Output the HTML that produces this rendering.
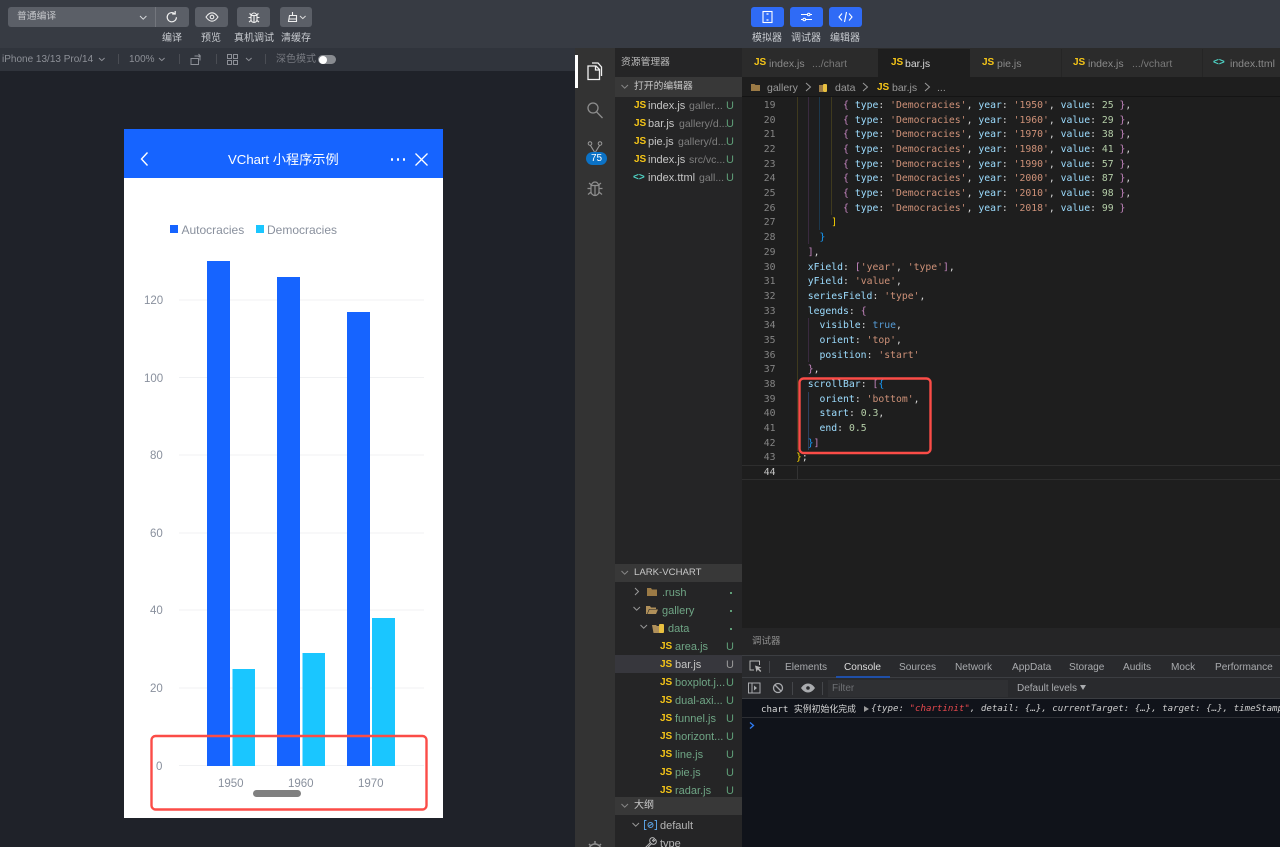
<!DOCTYPE html>
<html><head><meta charset="utf-8">
<style>
html,body{margin:0;padding:0;width:1280px;height:847px;overflow:hidden;background:#1f2229}
body{position:relative;font-family:"Liberation Sans","Noto Sans CJK SC",sans-serif;color:#ccc}
.a,.t,.js,.u{position:absolute}
.t,.js,.u{margin-top:1px}
.t{white-space:nowrap;line-height:16px}
.js{font-weight:bold;color:#f5c518;font-size:10px;line-height:16px;font-family:"Liberation Sans",sans-serif}
.u{font-size:11px;line-height:16px;color:#5f9e78}
svg{position:absolute;overflow:visible}
.lb{font-size:10px;color:#c9ccd1;transform:translateX(-50%)}
.btn{position:absolute;top:7px;height:20px;background:#5b5f67;border-radius:3px}
.bb{position:absolute;top:7px;width:33px;height:20px;background:#2f6bf6;border-radius:3px}
.s{font-size:11px;color:#c5c5c5}
.g{color:#6fa585}
.dim{color:#7f7f7f;font-size:10.5px}
.tab{font-size:10.5px;color:#8a8a8a}
#code{position:absolute;left:796px;top:98.96px;font:9.78px/14.68px "DejaVu Sans Mono","Liberation Mono",monospace;color:#d4d4d4;white-space:pre}
#nums{position:absolute;left:742px;width:33.5px;top:98.96px;font:9.78px/14.68px "DejaVu Sans Mono","Liberation Mono",monospace;color:#858585;text-align:right}
.k{color:#9cdcfe}.r{color:#ce9178}.n{color:#b5cea8}.b{color:#569cd6}.m{color:#c586c0}.c{color:#179fff}.y{color:#ffd700}
.ax{font-size:11.5px;color:#89909d;line-height:14px}
.dt{font-size:10.1px;color:#a9abae}
</style></head><body>

<!-- top toolbar -->
<div class="a" style="left:0;top:0;width:1280px;height:48px;background:#373b43"></div>
<div class="a" style="left:8px;top:7px;width:147px;height:20px;background:#5b5f67;border-radius:3px 0 0 3px"></div>
<div class="a" style="left:155px;top:7px;width:34px;height:20px;background:#5b5f67;border-radius:0 3px 3px 0;border-left:1px solid #73767d;box-sizing:border-box"></div>
<div class="t" style="left:17px;top:8px;font-size:9.8px;color:#c4c6ca">普通编译</div>
<svg style="left:139px;top:15px" width="9" height="6"><path d="M1 1l3.200 3.200L7.400 1" fill="none" stroke="#d6d8db" stroke-width="1"/></svg>
<svg style="left:165px;top:10px" width="14" height="14" viewBox="0 0 14 14"><path d="M11.400 7.200a4.600 4.600 0 1 1-1.500-3.400M10.200 1v3h-3" fill="none" stroke="#f0f0f0" stroke-width="1.200"/></svg>
<div class="t lb" style="left:172px;top:30px">编译</div>

<div class="btn" style="left:195px;width:33px"></div>
<svg style="left:205px;top:11px" width="14" height="12" viewBox="0 0 14 12"><path d="M1 6c2-3 4-4.200 6-4.200S11 3 13 6c-2 3-4 4.200-6 4.200S3 9 1 6z" fill="none" stroke="#eee" stroke-width="1.100"/><circle cx="7" cy="6" r="1.800" fill="none" stroke="#eee" stroke-width="1.100"/></svg>
<div class="t lb" style="left:211px;top:30px">预览</div>

<div class="btn" style="left:237px;width:33px"></div>
<svg style="left:247px;top:10px" width="14" height="14" viewBox="0 0 14 14"><path d="M4.500 5.500a2.500 2.500 0 0 1 5 0M4 5.500h6v4a3 3 0 0 1-6 0zM7 5.500v7M4 7.500H1.500M10 7.500h2.500M4 10.500l-2 1.500M10 10.500l2 1.500M4.500 5L2.500 3.500M9.500 5l2-1.500" fill="none" stroke="#eee" stroke-width="1.100"/></svg>
<div class="t lb" style="left:254px;top:30px">真机调试</div>

<div class="btn" style="left:280px;width:32px"></div>
<svg style="left:288px;top:11px" width="12" height="12" viewBox="0 0 12 12"><path d="M4.500 1v3.500M1.500 4.500h7v6h-8zM1 8h7" fill="none" stroke="#eee" stroke-width="1.100"/></svg>
<svg style="left:299px;top:15px" width="8" height="5"><path d="M1 1l2.800 2.600L6.600 1" fill="none" stroke="#ddd" stroke-width="1"/></svg>
<div class="t lb" style="left:296px;top:30px">清缓存</div>

<div class="bb" style="left:751px"></div>
<svg style="left:761px;top:10px" width="13" height="14" viewBox="0 0 13 14"><rect x="2" y="1.500" width="9" height="11" fill="none" stroke="#fff" stroke-width="1.100"/><path d="M5.500 4h2M5.500 10h2" stroke="#fff" stroke-width="1.200"/></svg>
<div class="t lb" style="left:767px;top:30px">模拟器</div>
<div class="bb" style="left:790px"></div>
<svg style="left:800px;top:11px" width="13" height="12" viewBox="0 0 13 12"><path d="M1 3.500h6.500M10 3.500h2M1 8.500h2M5.500 8.500H12" stroke="#fff" stroke-width="1.100"/><circle cx="8.700" cy="3.500" r="1.300" fill="none" stroke="#fff"/><circle cx="4.300" cy="8.500" r="1.300" fill="none" stroke="#fff"/></svg>
<div class="t lb" style="left:806px;top:30px">调试器</div>
<div class="bb" style="left:829px"></div>
<svg style="left:838px;top:11px" width="15" height="12" viewBox="0 0 15 12"><path d="M4 2.500L1 6l3 3.500M11 2.500L14 6l-3 3.500M8.500 1L6.500 11" fill="none" stroke="#fff" stroke-width="1.100"/></svg>
<div class="t lb" style="left:845px;top:30px">编辑器</div>

<!-- second toolbar -->
<div class="a" style="left:0;top:48px;width:575px;height:23px;background:#30343c"></div>
<div class="t" style="left:2px;top:50.500px;font-size:10px;color:#8d9097">iPhone 13/13 Pro/14</div>
<svg style="left:98px;top:57px" width="8" height="5"><path d="M1 1l2.800 2.600L6.600 1" fill="none" stroke="#8d9097"/></svg>
<div class="a" style="left:118px;top:54px;width:1px;height:10px;background:#4a4d54"></div>
<div class="t" style="left:129px;top:50.500px;font-size:10px;color:#8d9097">100%</div>
<svg style="left:158px;top:57px" width="8" height="5"><path d="M1 1l2.800 2.600L6.600 1" fill="none" stroke="#8d9097"/></svg>
<div class="a" style="left:179px;top:54px;width:1px;height:10px;background:#4a4d54"></div>
<svg style="left:190px;top:53px" width="13" height="13" viewBox="0 0 13 13"><path d="M1 5.500h7.500v6H1zM4.500 3h5.500v4.500M8.500 1l1.800 2-1.800 1" fill="none" stroke="#8d9097"/></svg>
<div class="a" style="left:216px;top:54px;width:1px;height:10px;background:#4a4d54"></div>
<svg style="left:227px;top:54px" width="11" height="11" viewBox="0 0 11 11"><path d="M.5.500h4v4h-4zM6.500.500h4v4h-4zM.5 6.500h4v4h-4zM6.500 6.500h4v4h-4z" fill="none" stroke="#8d9097"/></svg>
<svg style="left:245px;top:57px" width="8" height="5"><path d="M1 1l2.800 2.600L6.600 1" fill="none" stroke="#8d9097"/></svg>
<div class="a" style="left:265px;top:54px;width:1px;height:10px;background:#4a4d54"></div>
<div class="t" style="left:276px;top:51px;font-size:10px;color:#777a81">深色模式</div>
<div class="a" style="left:318px;top:55px;width:18px;height:9px;background:#888b90;border-radius:5px"></div>
<div class="a" style="left:319px;top:55.500px;width:8px;height:8px;background:#fff;border-radius:50%"></div>

<!-- phone -->
<div class="a" style="left:124px;top:129px;width:319px;height:689px;background:#fff"></div>
<div class="a" style="left:124px;top:129px;width:319px;height:49px;background:#1664ff"></div>
<svg style="left:139px;top:151px" width="11" height="16" viewBox="0 0 11 16"><path d="M8.500 1.500L2.500 8l6 6.500" fill="none" stroke="#fff" stroke-width="1.400"/></svg>
<div class="t" style="left:228px;top:150.500px;font-size:13.200px;color:#fff">VChart 小程序示例</div>
<div class="a" style="left:390.500px;top:158px;width:2.500px;height:2.500px;background:#fff;border-radius:50%"></div>
<div class="a" style="left:396.500px;top:158px;width:2.500px;height:2.500px;background:#fff;border-radius:50%"></div>
<div class="a" style="left:402.500px;top:158px;width:2.500px;height:2.500px;background:#fff;border-radius:50%"></div>
<svg style="left:415px;top:153px" width="13" height="13" viewBox="0 0 13 13"><path d="M.5.500l12 12M12.500.500l-12 12" stroke="#fff" stroke-width="1.300"/></svg>

<div class="a" style="left:170px;top:225px;width:8px;height:8px;background:#1664ff"></div>
<div class="t" style="left:181.500px;top:221px;font-size:12px;color:#89909d">Autocracies</div>
<div class="a" style="left:256px;top:225px;width:8px;height:8px;background:#1ac6ff"></div>
<div class="t" style="left:267px;top:221px;font-size:12px;color:#89909d">Democracies</div>

<svg style="left:0;top:0" width="1280" height="847">
<g stroke="#f0f1f3" stroke-width="1">
<path d="M179 300h245M179 377.500h245M179 455h245M179 533h245M179 610h245M179 688h245M179 765.500h245"/>
</g>
<g fill="#1664ff">
<rect x="207" y="261" width="23" height="505"/>
<rect x="277" y="277" width="23" height="489"/>
<rect x="347" y="312" width="23" height="454"/>
</g>
<g fill="#1ac6ff">
<rect x="232.500" y="669" width="22.500" height="97"/>
<rect x="302.500" y="653" width="22.500" height="113"/>
<rect x="372" y="618" width="23" height="148"/>
</g>
<rect x="253" y="790" width="48" height="7" rx="3.500" fill="#808080"/>
<rect x="151.500" y="736" width="275" height="73.500" rx="4" fill="none" stroke="#fb4c47" stroke-width="2.400"/>
</svg>
<div class="t ax" style="left:144px;top:293px">120</div>
<div class="t ax" style="left:144px;top:371px">100</div>
<div class="t ax" style="left:150px;top:448px">80</div>
<div class="t ax" style="left:150px;top:526px">60</div>
<div class="t ax" style="left:150px;top:603px">40</div>
<div class="t ax" style="left:150px;top:681px">20</div>
<div class="t ax" style="left:156px;top:759px">0</div>
<div class="t ax" style="left:218px;top:776px">1950</div>
<div class="t ax" style="left:288px;top:776px">1960</div>
<div class="t ax" style="left:358px;top:776px">1970</div>

<!-- activity bar -->
<div class="a" style="left:575px;top:48px;width:40px;height:799px;background:#333"></div>
<div class="a" style="left:575px;top:55px;width:2.500px;height:33px;background:#fff"></div>
<svg style="left:586px;top:61px" width="17" height="20" viewBox="0 0 17 20"><path d="M2 5h8l3.500 3.500V18.500H2zM9.500 5v4h4M6 2h6l3.500 4v9" fill="none" stroke="#f0f0f0" stroke-width="1.300"/></svg>
<svg style="left:586px;top:101px" width="18" height="18" viewBox="0 0 18 18"><circle cx="7" cy="7" r="5" fill="none" stroke="#8e8e8e" stroke-width="1.300"/><path d="M10.500 10.800L16.500 17" stroke="#8e8e8e" stroke-width="1.300"/></svg>
<svg style="left:587px;top:141px" width="16" height="14" viewBox="0 0 16 14"><circle cx="3" cy="2.500" r="1.800" fill="none" stroke="#9a9a9a"/><circle cx="13" cy="2.500" r="1.800" fill="none" stroke="#9a9a9a"/><path d="M3.500 4.500L7.500 11M12.500 4.500L8.500 11" fill="none" stroke="#9a9a9a" stroke-width="1.100"/></svg>
<div class="a" style="left:586px;top:152px;width:21px;height:13px;background:#0b72c6;border-radius:7px;color:#fff;font-size:10px;line-height:13px;text-align:center">75</div>
<svg style="left:586px;top:179px" width="18" height="18" viewBox="0 0 18 18"><path d="M5.500 6.500a3.500 3.500 0 0 1 7 0M5 6.500h8v6a4 4 0 0 1-8 0zM9 6.500v10M5 9.500H1.500M13 9.500h3.500M5 13l-3 2.500M13 13l3 2.500M5.500 6L3 4M12.500 6L15 4" fill="none" stroke="#8e8e8e" stroke-width="1.200"/></svg>
<svg style="left:586px;top:841px" width="18" height="18" viewBox="0 0 18 18"><circle cx="9" cy="9" r="6" fill="none" stroke="#8e8e8e" stroke-width="1.500"/><path d="M9 0v3M3 3l2 2M15 3l-2 2M0 9h3M15 9h3" stroke="#8e8e8e" stroke-width="1.500"/></svg>

<!-- sidebar -->
<div class="a" style="left:615px;top:48px;width:127px;height:799px;background:#252526"></div>
<div class="t" style="left:621px;top:54px;font-size:9.800px;color:#bdbdbd">资源管理器</div>
<div class="a" style="left:615px;top:77px;width:127px;height:20px;background:#383838"></div>
<svg style="left:621px;top:84px" width="8" height="6"><path d="M.5 1l3.200 3.200L7 1" fill="none" stroke="#888"/></svg>
<div class="t" style="left:634px;top:78px;font-size:9.800px;color:#c8c8c8">打开的编辑器</div>

<div class="js" style="left:634px;top:97px">JS</div><div class="t s" style="left:648px;top:97px">index.js</div><div class="t dim" style="left:689px;top:97px">galler...</div><div class="u" style="left:726px;top:97px">U</div>
<div class="js" style="left:634px;top:115px">JS</div><div class="t s" style="left:648px;top:115px">bar.js</div><div class="t dim" style="left:679px;top:115px">gallery/d...</div><div class="u" style="left:726px;top:115px">U</div>
<div class="js" style="left:634px;top:133px">JS</div><div class="t s" style="left:648px;top:133px">pie.js</div><div class="t dim" style="left:678px;top:133px">gallery/d...</div><div class="u" style="left:726px;top:133px">U</div>
<div class="js" style="left:634px;top:151px">JS</div><div class="t s" style="left:648px;top:151px">index.js</div><div class="t dim" style="left:689px;top:151px">src/vc...</div><div class="u" style="left:726px;top:151px">U</div>
<div class="js" style="left:633px;top:169px;color:#4fd6c8">&lt;&gt;</div><div class="t s" style="left:648px;top:169px">index.ttml</div><div class="t dim" style="left:699px;top:169px">gall...</div><div class="u" style="left:726px;top:169px">U</div>

<div class="a" style="left:615px;top:564px;width:127px;height:18px;background:#383838"></div>
<svg style="left:621px;top:570px" width="8" height="6"><path d="M.5 1l3.200 3.200L7 1" fill="none" stroke="#888"/></svg>
<div class="t" style="left:634px;top:564px;font-size:9.600px;color:#c8c8c8">LARK-VCHART</div>

<svg style="left:634px;top:587px" width="6" height="9"><path d="M1 1l3.500 3.500L1 8" fill="none" stroke="#999"/></svg>
<svg style="left:647px;top:587px" width="11" height="9"><path d="M0 1h4l1 1.500h5V9H0z" fill="#9b7a45"/></svg>
<div class="t s g" style="left:662px;top:584px">.rush</div><div class="a" style="left:730px;top:592px;width:2px;height:2px;background:#5f9e78"></div>
<svg style="left:633px;top:606px" width="8" height="6"><path d="M.5 1l3.200 3.200L7 1" fill="none" stroke="#999"/></svg>
<svg style="left:646px;top:605px" width="12" height="9"><path d="M0 1h4l1 1.500h5V4H3L1 9H0zM3.500 4.500H12L10 9H1.500z" fill="#b0905a"/></svg>
<div class="t s g" style="left:662px;top:602px">gallery</div><div class="a" style="left:730px;top:610px;width:2px;height:2px;background:#5f9e78"></div>
<svg style="left:640px;top:624px" width="8" height="6"><path d="M.5 1l3.200 3.200L7 1" fill="none" stroke="#999"/></svg>
<svg style="left:652px;top:623px" width="13" height="10"><path d="M0 2h4l1 1h3v7H1.500z" fill="#b0905a"/><rect x="7" y="1" width="5" height="9" rx="1" fill="#e8c040"/></svg>
<div class="t s g" style="left:668px;top:620px">data</div><div class="a" style="left:730px;top:628px;width:2px;height:2px;background:#5f9e78"></div>

<div class="a" style="left:615px;top:655px;width:127px;height:18px;background:#37373d"></div>
<div class="js" style="left:660px;top:638px">JS</div><div class="t s g" style="left:675px;top:638px">area.js</div><div class="u" style="left:726px;top:638px">U</div>
<div class="js" style="left:660px;top:656px">JS</div><div class="t s" style="left:675px;top:656px">bar.js</div><div class="u" style="left:726px;top:656px;color:#9a9a9a">U</div>
<div class="js" style="left:660px;top:674px">JS</div><div class="t s g" style="left:675px;top:674px">boxplot.j...</div><div class="u" style="left:726px;top:674px">U</div>
<div class="js" style="left:660px;top:692px">JS</div><div class="t s g" style="left:675px;top:692px">dual-axi...</div><div class="u" style="left:726px;top:692px">U</div>
<div class="js" style="left:660px;top:710px">JS</div><div class="t s g" style="left:675px;top:710px">funnel.js</div><div class="u" style="left:726px;top:710px">U</div>
<div class="js" style="left:660px;top:728px">JS</div><div class="t s g" style="left:675px;top:728px">horizont...</div><div class="u" style="left:726px;top:728px">U</div>
<div class="js" style="left:660px;top:746px">JS</div><div class="t s g" style="left:675px;top:746px">line.js</div><div class="u" style="left:726px;top:746px">U</div>
<div class="js" style="left:660px;top:764px">JS</div><div class="t s g" style="left:675px;top:764px">pie.js</div><div class="u" style="left:726px;top:764px">U</div>
<div class="js" style="left:660px;top:782px">JS</div><div class="t s g" style="left:675px;top:782px">radar.js</div><div class="u" style="left:726px;top:782px">U</div>

<div class="a" style="left:615px;top:797px;width:127px;height:18px;background:#383838"></div>
<svg style="left:621px;top:803px" width="8" height="6"><path d="M.5 1l3.200 3.200L7 1" fill="none" stroke="#888"/></svg>
<div class="t" style="left:634px;top:797px;font-size:10px;color:#c8c8c8">大纲</div>
<svg style="left:632px;top:822px" width="8" height="6"><path d="M.5 1l3.200 3.200L7 1" fill="none" stroke="#999"/></svg>
<svg style="left:644px;top:820px" width="13" height="10" viewBox="0 0 13 10"><path d="M2.500.5H.5v9h2M10.500.5h2v9h-2" fill="none" stroke="#5aa0e0"/><circle cx="6.500" cy="5" r="2.500" fill="none" stroke="#5aa0e0"/><path d="M4.500 6.500l4-3" stroke="#5aa0e0"/></svg>
<div class="t s" style="left:660px;top:817px;color:#b5b5b5">default</div>
<svg style="left:644px;top:837px" width="13" height="12" viewBox="0 0 13 12"><path d="M1 11l5.500-5.500a2.800 2.800 0 0 1 4-4L8.500 3.500l1 1 2-2a2.800 2.800 0 0 1-4 4L2.500 12" fill="none" stroke="#b5b5b5"/></svg>
<div class="t s" style="left:660px;top:835px;color:#b5b5b5">type</div>

<!-- tabs -->
<div class="a" style="left:742px;top:48px;width:538px;height:29px;background:#2b2b2b"></div>
<div class="a" style="left:878px;top:49px;width:92px;height:28px;background:#1e1e1e"></div>
<div class="a" style="left:1061px;top:49px;width:1px;height:28px;background:#252525"></div>
<div class="a" style="left:1202px;top:49px;width:1px;height:28px;background:#252525"></div>
<div class="js" style="left:754px;top:54px">JS</div><div class="t tab" style="left:769px;top:55px">index.js</div><div class="t tab" style="left:812px;top:55px;color:#7a7a7a">.../chart</div>
<div class="js" style="left:891px;top:54px">JS</div><div class="t tab" style="left:905px;top:55px;color:#d8d8d8">bar.js</div>
<div class="js" style="left:982px;top:54px">JS</div><div class="t tab" style="left:997px;top:55px">pie.js</div>
<div class="js" style="left:1073px;top:54px">JS</div><div class="t tab" style="left:1088px;top:55px">index.js</div><div class="t tab" style="left:1132px;top:55px;color:#7a7a7a">.../vchart</div>
<div class="js" style="left:1213px;top:54px;color:#4fd6c8">&lt;&gt;</div><div class="t tab" style="left:1230px;top:55px">index.ttml</div>

<!-- breadcrumb -->
<div class="a" style="left:742px;top:77px;width:538px;height:558px;background:#1e1e1e"></div>
<div class="a" style="left:742px;top:96px;width:538px;height:1px;background:#141414"></div>
<svg style="left:751px;top:83px" width="9" height="8"><path d="M0 1h3.500l1 1H9v6H0z" fill="#9b7a45"/></svg>
<div class="t tab" style="left:767px;top:79px;color:#9a9a9a">gallery</div>
<svg style="left:805px;top:82px" width="7" height="10"><path d="M1 1l4.500 4L1 9" fill="none" stroke="#999"/></svg>
<svg style="left:819px;top:83px" width="9" height="9"><path d="M0 2h4v7H0z" fill="#9b7a45"/><rect x="4" y="1" width="4" height="8" rx="1" fill="#e8c040"/></svg>
<div class="t tab" style="left:835px;top:79px;color:#9a9a9a">data</div>
<svg style="left:862px;top:82px" width="7" height="10"><path d="M1 1l4.500 4L1 9" fill="none" stroke="#999"/></svg>
<div class="js" style="left:877px;top:79px">JS</div>
<div class="t tab" style="left:892px;top:79px;color:#9a9a9a">bar.js</div>
<svg style="left:924px;top:82px" width="7" height="10"><path d="M1 1l4.500 4L1 9" fill="none" stroke="#999"/></svg>
<div class="t tab" style="left:937px;top:79px;color:#9a9a9a">...</div>

<!-- code -->
<div class="a" style="left:796.500px;top:97px;width:1px;height:354px;background:#3f3a1e"></div>
<div class="a" style="left:807.500px;top:97px;width:1px;height:147px;background:#3a2a40"></div>
<div class="a" style="left:819px;top:97px;width:1px;height:133px;background:#1c384c"></div>
<div class="a" style="left:831px;top:97px;width:1px;height:118px;background:#3f3a1e"></div>
<div class="a" style="left:807.500px;top:318px;width:1px;height:44px;background:#3a2a40"></div>
<div class="a" style="left:807.500px;top:392px;width:1px;height:58px;background:#2c3f5e"></div>
<div class="a" style="left:742px;top:465px;width:538px;height:15px;box-sizing:border-box;border-top:1px solid #2e2e2e;border-bottom:1px solid #2e2e2e"></div>
<div class="a" style="left:796.500px;top:466px;width:1px;height:13px;background:#333"></div>
<div id="nums">19<br>20<br>21<br>22<br>23<br>24<br>25<br>26<br>27<br>28<br>29<br>30<br>31<br>32<br>33<br>34<br>35<br>36<br>37<br>38<br>39<br>40<br>41<br>42<br>43<br><span style="color:#c6c6c6">44</span></div>
<div id="code">        <span class="m">{</span> <span class="k">type</span>: <span class="r">'Democracies'</span>, <span class="k">year</span>: <span class="r">'1950'</span>, <span class="k">value</span>: <span class="n">25</span> <span class="m">}</span>,
        <span class="m">{</span> <span class="k">type</span>: <span class="r">'Democracies'</span>, <span class="k">year</span>: <span class="r">'1960'</span>, <span class="k">value</span>: <span class="n">29</span> <span class="m">}</span>,
        <span class="m">{</span> <span class="k">type</span>: <span class="r">'Democracies'</span>, <span class="k">year</span>: <span class="r">'1970'</span>, <span class="k">value</span>: <span class="n">38</span> <span class="m">}</span>,
        <span class="m">{</span> <span class="k">type</span>: <span class="r">'Democracies'</span>, <span class="k">year</span>: <span class="r">'1980'</span>, <span class="k">value</span>: <span class="n">41</span> <span class="m">}</span>,
        <span class="m">{</span> <span class="k">type</span>: <span class="r">'Democracies'</span>, <span class="k">year</span>: <span class="r">'1990'</span>, <span class="k">value</span>: <span class="n">57</span> <span class="m">}</span>,
        <span class="m">{</span> <span class="k">type</span>: <span class="r">'Democracies'</span>, <span class="k">year</span>: <span class="r">'2000'</span>, <span class="k">value</span>: <span class="n">87</span> <span class="m">}</span>,
        <span class="m">{</span> <span class="k">type</span>: <span class="r">'Democracies'</span>, <span class="k">year</span>: <span class="r">'2010'</span>, <span class="k">value</span>: <span class="n">98</span> <span class="m">}</span>,
        <span class="m">{</span> <span class="k">type</span>: <span class="r">'Democracies'</span>, <span class="k">year</span>: <span class="r">'2018'</span>, <span class="k">value</span>: <span class="n">99</span> <span class="m">}</span>
      <span class="y">]</span>
    <span class="c">}</span>
  <span class="m">]</span>,
  <span class="k">xField</span>: <span class="m">[</span><span class="r">'year'</span>, <span class="r">'type'</span><span class="m">]</span>,
  <span class="k">yField</span>: <span class="r">'value'</span>,
  <span class="k">seriesField</span>: <span class="r">'type'</span>,
  <span class="k">legends</span>: <span class="m">{</span>
    <span class="k">visible</span>: <span class="b">true</span>,
    <span class="k">orient</span>: <span class="r">'top'</span>,
    <span class="k">position</span>: <span class="r">'start'</span>
  <span class="m">}</span>,
  <span class="k">scrollBar</span>: <span class="m">[</span><span class="c">{</span>
    <span class="k">orient</span>: <span class="r">'bottom'</span>,
    <span class="k">start</span>: <span class="n">0.3</span>,
    <span class="k">end</span>: <span class="n">0.5</span>
  <span class="c">}</span><span class="m">]</span>
<span class="y">}</span>;
</div>
<svg style="left:0;top:0" width="1280" height="847"><rect x="799.500" y="378.500" width="131" height="74.500" rx="4" fill="none" stroke="#fb4c47" stroke-width="2.400"/></svg>

<!-- debugger -->
<div class="a" style="left:742px;top:628px;width:538px;height:27px;background:#252526"></div>
<div class="t" style="left:752px;top:633px;font-size:9.500px;color:#8f8f8f">调试器</div>
<div class="a" style="left:742px;top:655px;width:538px;height:44px;background:#292a2d;border-top:1px solid #3c3e42;box-sizing:border-box"></div>
<div class="a" style="left:742px;top:677px;width:538px;height:1px;background:#3c3e42"></div>
<div class="a" style="left:742px;top:698px;width:538px;height:149px;background:#10131a"></div>
<div class="a" style="left:742px;top:698px;width:538px;height:1px;background:#3c3e42"></div>
<div class="a" style="left:742px;top:717px;width:538px;height:1px;background:#2c2e33"></div>
<svg style="left:749px;top:660px" width="13" height="13" viewBox="0 0 13 13"><path d="M5 10H1V1h9.500v4" fill="none" stroke="#b5b5b5"/><path d="M6 5.500l1.500 6.500 1.300-2.500 2.500 2.500 1-1L10 8.500l2.500-1z" fill="#b5b5b5"/></svg>
<div class="a" style="left:769px;top:661px;width:1px;height:12px;background:#44464a"></div>
<div class="t dt" style="left:785px;top:659px">Elements</div>
<div class="t dt" style="left:844px;top:659px;color:#dcdcdc">Console</div>
<div class="a" style="left:836px;top:676px;width:54px;height:1.500px;background:#1f4fa8"></div>
<div class="t dt" style="left:899px;top:659px">Sources</div>
<div class="t dt" style="left:955px;top:659px">Network</div>
<div class="t dt" style="left:1012px;top:659px">AppData</div>
<div class="t dt" style="left:1069px;top:659px">Storage</div>
<div class="t dt" style="left:1123px;top:659px">Audits</div>
<div class="t dt" style="left:1171px;top:659px">Mock</div>
<div class="t dt" style="left:1215px;top:659px">Performance</div>

<svg style="left:748px;top:682px" width="13" height="12" viewBox="0 0 13 12"><rect x=".5" y="1" width="11.500" height="10" fill="none" stroke="#a9abae"/><path d="M4 1v10" stroke="#a9abae"/><path d="M6 3.500l3 2.500-3 2.500z" fill="#a9abae"/></svg>
<svg style="left:772px;top:682px" width="12" height="12" viewBox="0 0 12 12"><circle cx="6" cy="6" r="4.500" fill="none" stroke="#a9abae" stroke-width="1.300"/><path d="M3 3l6 6" stroke="#a9abae" stroke-width="1.300"/></svg>
<div class="a" style="left:792px;top:682px;width:1px;height:13px;background:#44464a"></div>
<svg style="left:801px;top:683px" width="14" height="10" viewBox="0 0 14 10"><path d="M0 5c2-3 4.500-4.500 7-4.500S12 2 14 5c-2 3-4.500 4.500-7 4.500S2 8 0 5z" fill="#a9abae"/><circle cx="7" cy="5" r="1.800" fill="#292a2d"/></svg>
<div class="a" style="left:822px;top:682px;width:1px;height:13px;background:#44464a"></div>
<div class="a" style="left:828px;top:680px;width:180px;height:17px;background:#2f3033"></div>
<div class="t" style="left:832px;top:680px;font-size:10px;color:#6d6f73">Filter</div>
<div class="t" style="left:1017px;top:680px;font-size:10px;color:#a9abae">Default levels</div>
<svg style="left:1080px;top:685px" width="6" height="5"><path d="M0 0h6L3 5z" fill="#a9abae"/></svg>

<div class="t" style="left:761px;top:700px;font:9.100px/16px 'DejaVu Sans Mono','Liberation Mono',monospace;color:#d8d8d8">chart <span style="font-family:'Noto Sans CJK SC',sans-serif;font-size:8.900px">实例初始化完成</span></div>
<svg style="left:864px;top:706px" width="5" height="6"><path d="M0 0l5 3-5 3z" fill="#9a9a9a"/></svg>
<div class="t" style="left:871px;top:700px;font:oblique 9.130px/16px 'DejaVu Sans Mono','Liberation Mono',monospace;color:#cfcfcf">{type: <span style="color:#e5484d">"chartinit"</span>, detail: {…}, currentTarget: {…}, target: {…}, timeStamp:</div>
<svg style="left:749px;top:722px" width="6" height="7"><path d="M1 .5l3.500 3-3.500 3" fill="none" stroke="#2f7df6" stroke-width="1.300"/></svg>

</body></html>
